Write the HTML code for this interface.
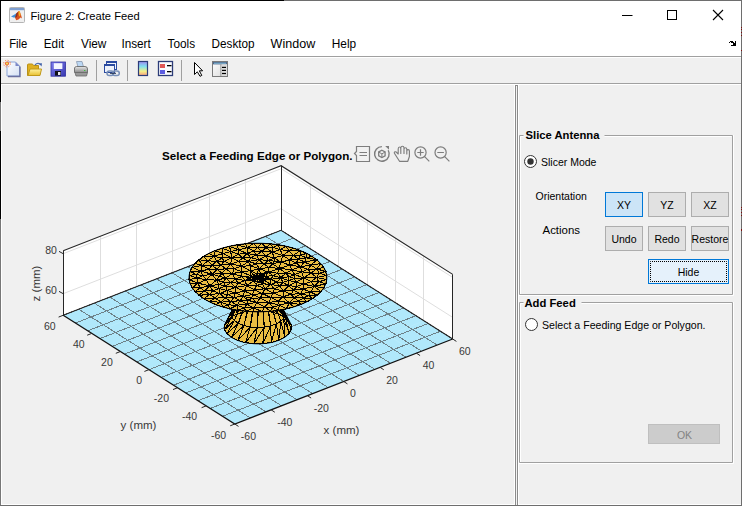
<!DOCTYPE html>
<html><head><meta charset="utf-8">
<style>
html,body{margin:0;padding:0;width:742px;height:506px;overflow:hidden;background:#fff}
svg{position:absolute;left:0;top:0}
</style></head><body>
<svg width="742" height="506" viewBox="0 0 742 506">
<!-- window chrome -->
<rect x="0" y="0" width="742" height="506" fill="#fff"/>
<rect x="0" y="85" width="742" height="421" fill="#f0f0f0"/>
<rect x="1" y="57" width="740" height="26" fill="#f0f0f0"/>
<rect x="1" y="56" width="740" height="1" fill="#a0a0a0"/>
<rect x="1" y="57" width="740" height="1" fill="#fff"/>
<rect x="1" y="83" width="740" height="1" fill="#a0a0a0"/>
<rect x="1" y="84" width="740" height="1" fill="#fff"/>
<rect x="0" y="0" width="284" height="1" fill="#000"/>
<rect x="284" y="0" width="458" height="1" fill="#6e6e6e"/>
<rect x="0" y="0" width="1" height="102" fill="#000"/>
<rect x="0" y="102" width="1" height="29" fill="#7a7a7a"/>
<rect x="0" y="131" width="1" height="88" fill="#000"/>
<rect x="0" y="219" width="1" height="287" fill="#777"/>
<rect x="1" y="85" width="1" height="420" fill="#fff"/>
<rect x="1" y="504" width="740" height="1" fill="#fff"/>
<rect x="741" y="0" width="1" height="506" fill="#6e6e6e"/>
<rect x="0" y="505" width="742" height="1" fill="#6e6e6e"/>
<!-- title icon -->
<g transform="translate(9,7)">
<rect x="0.5" y="0.5" width="15" height="15" rx="1" fill="#efefef" stroke="#b4b4b4"/>
<rect x="1" y="1" width="14" height="2.2" fill="#7f9fd0"/>
<path d="M2,9.6 L6,7.2 L8,5.8 L8.8,8 L7,10.5 L4.5,10.6 Z" fill="#3f8fd8"/>
<path d="M7.5,6.2 L9.6,3.9 L10.8,4.6 L12.2,8.5 L13,11.5 L11.6,10.4 L9.5,12.5 L7.2,13.2 L6.2,11 Z" fill="#d9501e"/>
<path d="M9.6,3.9 L10.8,4.6 L11.6,8 L10.2,9.5 L9.6,6.5 Z" fill="#f2b51c"/>
<path d="M7.5,6.2 L9.2,5 L8.3,9 L6.6,11.2 L6.4,9.5 Z" fill="#8c2f1a"/>
</g>
<text x="30.4" y="19.5" font-family="Liberation Sans" font-size="11.8" fill="#000" textLength="109.2" lengthAdjust="spacingAndGlyphs">Figure 2: Create Feed</text>
<!-- caption buttons -->
<path d="M622,15.5H632.5" stroke="#000" stroke-width="1"/>
<rect x="667.5" y="10.5" width="9" height="9" fill="none" stroke="#000" stroke-width="1"/>
<path d="M713,10L723,20M723,10L713,20" stroke="#000" stroke-width="1.1"/>
<g fill="#000" shape-rendering="crispEdges">
<rect x="729" y="42" width="1" height="1"/><rect x="730" y="41" width="3" height="1"/><rect x="731" y="42" width="3" height="1"/>
<rect x="733" y="43" width="3" height="2"/><rect x="735" y="41" width="1" height="5"/><rect x="731" y="45" width="5" height="1"/><rect x="734" y="42" width="1" height="1" fill="#fff"/>
</g>
<g fill="#7a0a0a" shape-rendering="crispEdges">
<rect x="741" y="27" width="1" height="1"/><rect x="741" y="29" width="1" height="1"/><rect x="741" y="32" width="1" height="1"/><rect x="741" y="35" width="1" height="1"/><rect x="741" y="50" width="1" height="1"/>
<rect x="741" y="207" width="1" height="1"/><rect x="741" y="209" width="1" height="1"/><rect x="741" y="212" width="1" height="1"/><rect x="741" y="215" width="1" height="1"/><rect x="741" y="229" width="1" height="2"/>
</g>
<!-- menu -->
<g font-family="Liberation Sans" font-size="12" fill="#000" lengthAdjust="spacingAndGlyphs">
<text x="9.2" y="48" textLength="18.2" lengthAdjust="spacingAndGlyphs">File</text>
<text x="43.8" y="48" textLength="20.2" lengthAdjust="spacingAndGlyphs">Edit</text>
<text x="81" y="48" textLength="25.4" lengthAdjust="spacingAndGlyphs">View</text>
<text x="121.4" y="48" textLength="29.4" lengthAdjust="spacingAndGlyphs">Insert</text>
<text x="167.5" y="48" textLength="27.6" lengthAdjust="spacingAndGlyphs">Tools</text>
<text x="211.6" y="48" textLength="43" lengthAdjust="spacingAndGlyphs">Desktop</text>
<text x="270.6" y="48" textLength="44.6" lengthAdjust="spacingAndGlyphs">Window</text>
<text x="331.8" y="48" textLength="24.4" lengthAdjust="spacingAndGlyphs">Help</text>
</g>
<!-- toolbar -->
<g id="tb">
<defs>
<linearGradient id="pap" x1="0" y1="0" x2="1" y2="1"><stop offset="0" stop-color="#ffffff"/><stop offset="1" stop-color="#d4e0f4"/></linearGradient>
<linearGradient id="fold" x1="0" y1="0" x2="0" y2="1"><stop offset="0" stop-color="#fff2a0"/><stop offset="1" stop-color="#e8c030"/></linearGradient>
<linearGradient id="flop" x1="0" y1="0" x2="1" y2="1"><stop offset="0" stop-color="#8080f0"/><stop offset="1" stop-color="#3838b0"/></linearGradient>
<linearGradient id="prn" x1="0" y1="0" x2="0" y2="1"><stop offset="0" stop-color="#e8e8e8"/><stop offset="1" stop-color="#8a8a8a"/></linearGradient>
<linearGradient id="cb" x1="0" y1="0" x2="0" y2="1">
<stop offset="0" stop-color="#a08cf0"/><stop offset="0.35" stop-color="#80e0f0"/><stop offset="0.7" stop-color="#f4f088"/><stop offset="1" stop-color="#f8a080"/></linearGradient>
<linearGradient id="pe" x1="0" y1="0" x2="1" y2="1"><stop offset="0" stop-color="#ffffff"/><stop offset="1" stop-color="#d8d8d8"/></linearGradient>
</defs>
<!-- new -->
<path d="M7,62 H15.5 L19.5,66 V76 H7 Z" fill="url(#pap)" stroke="#8aa4d8" stroke-width="1"/>
<path d="M8,76.5 H20 V66.5" fill="none" stroke="#6a70a0" stroke-width="1.4"/>
<path d="M15.5,62 V66 H19.5 Z" fill="#7c88c8"/>
<circle cx="7" cy="63.6" r="3.4" fill="none" stroke="#f08050" stroke-width="1" stroke-dasharray="1.2,1.5"/>
<circle cx="7" cy="63.6" r="2.1" fill="#f06a30"/>
<circle cx="7" cy="63.6" r="1" fill="#e8f060"/>
<!-- open -->
<path d="M27.5,75.5 V65 Q27.5,64 28.5,64 H32.5 L33.5,65.5 H38.5 V75.5 Z" fill="#e0b020" stroke="#b89018" stroke-width="1"/>
<path d="M28,75.5 L30,69 H41.5 L40,75.5 Z" fill="url(#fold)" stroke="#c09818" stroke-width="1"/>
<path d="M35,65 Q37.5,62.2 40.5,64.5" fill="none" stroke="#5070b0" stroke-width="1.2"/>
<path d="M39,63.5 L42,63.3 L41.5,66.5 Z" fill="#4060a8"/>
<!-- save -->
<rect x="51" y="62" width="14.5" height="14.2" fill="url(#flop)" stroke="#3030a0" stroke-width="0.8"/>
<rect x="53.8" y="63.2" width="8.6" height="5.8" fill="#f4f6ff"/>
<rect x="55" y="71" width="6" height="4.6" fill="#101018"/>
<rect x="58" y="72" width="2.4" height="3" fill="#e8e8f0"/>
<!-- print -->
<path d="M76.5,61.5 H82 L83.5,67 H78 Z" fill="#bcd8f4" stroke="#8898b0" stroke-width="0.8"/>
<path d="M74.5,68 Q75,66.5 76.5,66.5 H85 Q87.5,66.5 87.5,69 V72.5 H74.5 Z" fill="url(#prn)" stroke="#6a6a6a" stroke-width="0.9"/>
<path d="M75,72.5 H87.5 L86.5,76 H76 Z" fill="#9a9a9a" stroke="#6a6a6a" stroke-width="0.8"/>
<rect x="84" y="70" width="1.4" height="1" fill="#40c040"/>
<rect x="96" y="60" width="1" height="21" fill="#a0a0a0"/>
<!-- link -->
<rect x="106.5" y="61.5" width="10" height="8" fill="#f0f4fc" stroke="#2a4aa0" stroke-width="1"/>
<rect x="106" y="61" width="11" height="2" fill="#2a4aa0"/>
<rect x="104.5" y="64.5" width="10" height="8" fill="#eef2fa" stroke="#2a4aa0" stroke-width="1"/>
<rect x="104" y="64" width="11" height="2" fill="#2a4aa0"/>
<rect x="107" y="71" width="6.5" height="4.6" rx="2.3" fill="none" stroke="#7890b8" stroke-width="1.5"/>
<rect x="112.5" y="71" width="6.8" height="4.6" rx="2.3" fill="none" stroke="#7890b8" stroke-width="1.5"/>
<path d="M110,73.3 H116" stroke="#203050" stroke-width="1"/>
<rect x="127" y="60" width="1" height="21" fill="#a0a0a0"/>
<!-- colorbar -->
<rect x="138.5" y="61.5" width="9" height="14" fill="url(#cb)" stroke="#2c3c78" stroke-width="1.2"/>
<!-- legend -->
<rect x="158.5" y="61.5" width="14" height="14" fill="#fafbff" stroke="#2c3c78" stroke-width="1.3"/>
<rect x="160" y="64" width="5" height="4" fill="#e05858"/>
<rect x="160" y="70" width="5" height="4" fill="#5c5ce0"/>
<rect x="167" y="65" width="4.5" height="1.3" fill="#000"/>
<rect x="167" y="71" width="4.5" height="1.3" fill="#000"/>
<rect x="181" y="60" width="1" height="21" fill="#a0a0a0"/>
<!-- cursor -->
<path d="M194.5,62.5 V74.5 L197.3,71.8 L200,76.3 L201.8,75.4 L199.3,70.8 H202.6 Z" fill="#fff" stroke="#000" stroke-width="1"/>
<!-- property editor -->
<rect x="212.5" y="61.5" width="15" height="15" fill="url(#pe)" stroke="#7a7a7a" stroke-width="1"/>
<rect x="213" y="62" width="14" height="2.4" fill="#50688c"/>
<rect x="214" y="62.8" width="12" height="0.8" fill="#90d0e8"/>
<rect x="220.5" y="64.4" width="1" height="11.6" fill="#7a7a7a"/>
<rect x="221.5" y="64.4" width="5.5" height="11.6" fill="#dcdcdc"/>
<rect x="222" y="66.8" width="4" height="1.2" fill="#000"/>
<rect x="222" y="69.8" width="4" height="1.2" fill="#000"/>
<rect x="222" y="72.9" width="4" height="1.2" fill="#000"/>
</g>
<!-- divider -->
<rect x="514" y="85" width="5" height="420" fill="#fff"/>
<rect x="515" y="85" width="3" height="420" fill="#8c8c8c"/>
<rect x="516" y="86" width="1" height="419" fill="#f4f4f4"/>
<!-- plot -->
<polygon points="63.2,315.28 281.1,230.28 281.1,165.68 63.2,250.68" fill="#fff"/>
<polygon points="281.1,230.28 452.7,339 452.7,274.4 281.1,165.68" fill="#fff"/>
<path d="M100.5,301.11V236.51M423.5,320.88V256.28M136.5,286.95V222.35M395.5,302.76V238.16M172.5,272.78V208.18M367.5,284.64V220.04M209.5,258.62V194.02M338.5,266.52V201.92M245.5,244.45V179.85M310.5,248.4V183.8M63.2,293.68L281.1,208.68L452.7,317.4M63.2,253.68L281.1,168.68L452.7,277.4" stroke="#dedede" stroke-width="1" fill="none"/>
<polygon points="63.2,315.28 281.1,230.28 452.7,339 234.8,424" fill="#b0e8fb"/>
<path d="M271.12,409.83L99.52,301.11M206.2,405.88L424.1,320.88M307.43,395.67L135.83,286.95M177.6,387.76L395.5,302.76M343.75,381.5L172.15,272.78M149,369.64L366.9,284.64M380.06,367.34L208.46,258.62M120.4,351.52L338.3,266.52M416.38,353.17L244.78,244.45M91.8,333.4L309.7,248.4" stroke="#b8ebfb" stroke-width="1" fill="none"/>
<path d="M63.2,315.28L281.1,230.28L452.7,339M250.36,417.93L78.76,309.21M222.54,416.23L440.44,331.24M265.93,411.86L94.33,303.14M210.29,408.47L428.18,323.47M281.49,405.79L109.89,297.07M198.03,400.7L415.92,315.71M297.06,399.72L125.46,291M185.77,392.94L403.67,307.94M312.62,393.64L141.02,284.92M173.51,385.17L391.41,300.18M328.18,387.57L156.58,278.85M161.26,377.41L379.15,292.41M343.75,381.5L172.15,272.78M149,369.64L366.9,284.64M359.31,375.43L187.71,266.71M136.74,361.87L354.64,276.88M374.88,369.36L203.28,260.64M124.49,354.11L342.38,269.11M390.44,363.29L218.84,254.57M112.23,346.34L330.12,261.35M406,357.22L234.4,248.5M99.97,338.58L317.87,253.58M421.57,351.15L249.97,242.43M87.71,330.81L305.61,245.82M437.13,345.08L265.53,236.36M75.46,323.05L293.35,238.05" stroke="#3c3634" stroke-opacity="0.58" stroke-width="1" fill="none" shape-rendering="crispEdges"/>
<path d="M63.2,315.28L281.1,230.28L452.7,339" stroke="#262626" stroke-width="1.1" fill="none"/>
<path d="M224.46,327.73L224.46,326.42L224.67,325.11L225.08,323.82L225.7,322.55L250.39,275.47L250.58,275.17L250.81,274.89L251.09,274.62L251.42,274.36L251.78,274.11L252.18,273.88L252.62,273.66L253.09,273.46L253.59,273.28L254.11,273.12L254.66,272.98L255.23,272.87L255.82,272.77L256.42,272.7L257.03,272.66L257.64,272.63L258.26,272.64L258.88,272.66L259.48,272.71L260.08,272.78L260.67,272.88L261.24,273L261.79,273.14L262.32,273.3L262.82,273.48L263.29,273.68L263.72,273.9L264.12,274.13L264.48,274.38L264.81,274.65L265.09,274.92L265.32,275.2L265.51,275.5L283.86,310.56L290.21,322.68L290.82,323.96L291.23,325.25L291.44,326.55L291.44,327.86L291.23,329.17L290.81,330.46L290.2,331.73L289.38,332.98L288.38,334.18L287.18,335.35L285.8,336.46L284.26,337.52L282.55,338.51L280.68,339.43L278.68,340.28L276.55,341.04L274.31,341.72L271.96,342.31L269.53,342.81L267.03,343.21L264.47,343.51L261.87,343.71L259.25,343.81L256.62,343.8L253.99,343.69L251.39,343.48L248.84,343.17L246.33,342.76L243.9,342.26L241.56,341.66L239.32,340.97L237.19,340.2L235.19,339.34L233.33,338.41L231.62,337.41L230.07,336.35L228.7,335.23L227.51,334.06L226.5,332.85L225.69,331.6L225.08,330.33L224.66,329.03L224.46,327.73Z" fill="#eabd42" stroke="#000" stroke-width="1"/>
<path d="M284.28,316.87L278.01,313.82L272.03,302.75ZM284.28,316.87L272.03,302.75L277.49,304.96ZM278.01,313.82L270.38,311.68L265.61,301.31ZM278.01,313.82L265.61,301.31L272.03,302.75ZM270.38,311.68L261.9,310.59L258.67,300.75ZM270.38,311.68L258.67,300.75L265.61,301.31ZM261.9,310.59L253.16,310.63L251.68,301.1ZM261.9,310.59L251.68,301.1L258.67,300.75ZM253.16,310.63L244.73,311.79L245.11,302.34ZM253.16,310.63L245.11,302.34L251.68,301.1ZM244.73,311.79L237.21,314L239.43,304.39ZM244.73,311.79L239.43,304.39L245.11,302.34ZM237.21,314L231.11,317.11L235,307.1ZM237.21,314L235,307.1L239.43,304.39ZM231.11,317.11L226.83,320.9L232.14,310.29ZM231.11,317.11L232.14,310.29L235,307.1ZM226.83,320.9L224.67,325.11L231.04,313.74ZM226.83,320.9L231.04,313.74L232.14,310.29ZM224.67,325.11L224.78,329.47L231.77,317.22ZM224.67,325.11L231.77,317.22L231.04,313.74ZM224.78,329.47L227.15,333.66L234.28,320.49ZM224.78,329.47L234.28,320.49L231.77,317.22ZM227.15,333.66L231.62,337.41L238.41,323.32ZM227.15,333.66L238.41,323.32L234.28,320.49ZM231.62,337.41L237.88,340.46L243.87,325.54ZM231.62,337.41L243.87,325.54L238.41,323.32ZM237.88,340.46L245.51,342.6L250.29,326.97ZM237.88,340.46L250.29,326.97L243.87,325.54ZM245.51,342.6L253.99,343.69L257.23,327.53ZM245.51,342.6L257.23,327.53L250.29,326.97ZM253.99,343.69L262.74,343.65L264.22,327.18ZM253.99,343.69L264.22,327.18L257.23,327.53ZM262.74,343.65L271.16,342.49L270.78,325.94ZM262.74,343.65L270.78,325.94L264.22,327.18ZM271.16,342.49L278.68,340.28L276.47,323.9ZM271.16,342.49L276.47,323.9L270.78,325.94ZM278.68,340.28L284.79,337.17L280.9,321.19ZM278.68,340.28L280.9,321.19L276.47,323.9ZM284.79,337.17L289.07,333.38L283.76,318ZM284.79,337.17L283.76,318L280.9,321.19ZM289.07,333.38L291.23,329.17L284.86,314.55ZM289.07,333.38L284.86,314.55L283.76,318ZM291.23,329.17L291.12,324.82L284.13,311.07ZM291.23,329.17L284.13,311.07L284.86,314.55ZM291.12,324.82L288.75,320.62L281.61,307.8ZM291.12,324.82L281.61,307.8L284.13,311.07ZM288.75,320.62L284.28,316.87L277.49,304.96ZM288.75,320.62L277.49,304.96L281.61,307.8ZM277.49,304.96L272.03,302.75L261.43,273.04ZM277.49,304.96L261.43,273.04L263.13,273.61ZM272.03,302.75L265.61,301.31L259.48,272.71ZM272.03,302.75L259.48,272.71L261.43,273.04ZM265.61,301.31L258.67,300.75L257.44,272.64ZM265.61,301.31L257.44,272.64L259.48,272.71ZM258.67,300.75L251.68,301.1L255.43,272.83ZM258.67,300.75L255.43,272.83L257.44,272.64ZM251.68,301.1L245.11,302.34L253.59,273.28ZM251.68,301.1L253.59,273.28L255.43,272.83ZM245.11,302.34L239.43,304.39L252.04,273.95ZM245.11,302.34L252.04,273.95L253.59,273.28ZM239.43,304.39L235,307.1L250.9,274.8ZM239.43,304.39L250.9,274.8L252.04,273.95ZM235,307.1L232.14,310.29L250.24,275.76ZM235,307.1L250.24,275.76L250.9,274.8ZM232.14,310.29L231.04,313.74L250.11,276.78ZM232.14,310.29L250.11,276.78L250.24,275.76ZM231.04,313.74L231.77,317.22L250.51,277.78ZM231.04,313.74L250.51,277.78L250.11,276.78ZM231.77,317.22L234.28,320.49L251.41,278.7ZM231.77,317.22L251.41,278.7L250.51,277.78ZM234.28,320.49L238.41,323.32L252.76,279.47ZM234.28,320.49L252.76,279.47L251.41,278.7ZM238.41,323.32L243.87,325.54L254.47,280.04ZM238.41,323.32L254.47,280.04L252.76,279.47ZM243.87,325.54L250.29,326.97L256.41,280.37ZM243.87,325.54L256.41,280.37L254.47,280.04ZM250.29,326.97L257.23,327.53L258.46,280.44ZM250.29,326.97L258.46,280.44L256.41,280.37ZM257.23,327.53L264.22,327.18L260.47,280.25ZM257.23,327.53L260.47,280.25L258.46,280.44ZM264.22,327.18L270.78,325.94L262.31,279.8ZM264.22,327.18L262.31,279.8L260.47,280.25ZM270.78,325.94L276.47,323.9L263.85,279.13ZM270.78,325.94L263.85,279.13L262.31,279.8ZM276.47,323.9L280.9,321.19L264.99,278.29ZM276.47,323.9L264.99,278.29L263.85,279.13ZM280.9,321.19L283.76,318L265.65,277.32ZM280.9,321.19L265.65,277.32L264.99,278.29ZM283.76,318L284.86,314.55L265.79,276.3ZM283.76,318L265.79,276.3L265.65,277.32ZM284.86,314.55L284.13,311.07L265.39,275.3ZM284.86,314.55L265.39,275.3L265.79,276.3ZM284.13,311.07L281.61,307.8L264.48,274.38ZM284.13,311.07L264.48,274.38L265.39,275.3ZM281.61,307.8L277.49,304.96L263.13,273.61ZM281.61,307.8L263.13,273.61L264.48,274.38Z" fill="#eabd42" stroke="#000" stroke-width="1" shape-rendering="crispEdges"/>
<path d="M312.06,256.43L309.75,255.05L307.31,253.73L304.73,252.47L302.02,251.28L299.19,250.17L296.24,249.12L293.19,248.16L290.05,247.28L286.81,246.48L283.5,245.76L280.12,245.14L276.68,244.6L273.18,244.15L269.65,243.79L266.08,243.53L262.49,243.35L258.88,243.28L255.28,243.29L251.68,243.4L248.1,243.61L244.54,243.9L241.03,244.29L237.56,244.77L234.14,245.34L230.79,246L227.52,246.74L224.32,247.57L221.22,248.48L218.22,249.48L215.33,250.54L212.56,251.68L209.91,252.9L207.39,254.18L205.01,255.52L202.78,256.93L200.7,258.39L198.77,259.9L197.01,261.46L195.41,263.07L193.99,264.71L192.74,266.39L191.67,268.11L190.78,269.84L190.07,271.6L189.55,273.38L189.22,275.16L189.08,276.95L189.12,278.75L189.36,280.54L189.78,282.32L190.39,284.09L191.18,285.84L192.16,287.57L193.32,289.27L194.65,290.94L196.16,292.57L197.84,294.17L199.68,295.71L201.68,297.21L203.84,298.65L206.14,300.03L208.59,301.36L211.17,302.61L213.88,303.8L216.71,304.92L219.65,305.96L222.7,306.92L225.85,307.81L229.08,308.61L232.39,309.32L235.78,309.95L239.22,310.49L242.71,310.94L246.25,311.29L249.82,311.56L253.41,311.73L257.01,311.81L260.62,311.79L264.22,311.68L267.8,311.48L271.35,311.18L274.87,310.79L278.34,310.31L281.76,309.74L285.11,309.08L288.38,308.34L291.57,307.51L294.67,306.6L297.67,305.61L300.56,304.54L303.34,303.4L305.98,302.19L308.5,300.91L310.88,299.56L313.11,298.16L315.2,296.7L317.12,295.18L318.89,293.62L320.48,292.02L321.91,290.37L323.16,288.69L324.23,286.98L325.12,285.24L325.82,283.48L326.34,281.71L326.67,279.92L326.82,278.13L326.77,276.34L326.54,274.54L326.12,272.76L325.51,270.99L324.71,269.24L323.74,267.51L322.58,265.81L321.24,264.14L319.74,262.51L318.06,260.92L316.22,259.37L314.21,257.88L312.06,256.43Z" fill="#eabd42" stroke="#000" stroke-width="1"/>
<path d="M246.96,253.47L238.4,249.77L238.37,254.12ZM238.4,249.77L246.96,253.47L247.35,247.75ZM269.1,302.42L260.26,297.94L256.62,302.46ZM260.26,297.94L269.1,302.42L270.84,297.47ZM200.91,271.16L202.88,275.66L212.1,274.31ZM225.72,278.08L235.35,279.15L232.21,273.67ZM209.53,294.53L219.64,293.55L212.69,290.7ZM192.24,287.7L200.06,287.81L197.93,283.25ZM314.27,286.49L318.66,281.74L310.98,281.58ZM318.66,281.74L314.27,286.49L325.73,283.75ZM318.66,281.74L316.6,277.44L310.98,281.58ZM222.99,253.62L222.17,248.2L215.33,250.54ZM214.05,256.3L222.99,253.62L215.33,250.54ZM222.19,273.25L225.72,278.08L232.21,273.67ZM222.19,273.25L217.01,269.32L212.1,274.31ZM209.02,269.14L200.91,271.16L212.1,274.31ZM217.01,269.32L209.02,269.14L212.1,274.31ZM222.11,258.04L214.05,256.3L216.62,261.28ZM214.05,256.3L222.11,258.04L222.99,253.62ZM257.26,247.41L265.96,247.57L261.93,243.34ZM265.96,247.57L257.26,247.41L261.97,251.53ZM253.92,251.12L257.26,247.41L247.35,247.75ZM246.96,253.47L253.92,251.12L247.35,247.75ZM257.26,247.41L253.92,251.12L261.97,251.53ZM257.26,247.41L253.62,243.33L247.35,247.75ZM253.62,243.33L245.36,243.83L247.35,247.75ZM253.62,243.33L257.26,247.41L261.93,243.34ZM230.73,251.55L238.4,249.77L229.52,246.28ZM222.17,248.2L230.73,251.55L229.52,246.28ZM230.73,251.55L222.17,248.2L222.99,253.62ZM238.4,249.77L230.73,251.55L238.37,254.12ZM245.36,243.83L237.29,244.81L247.35,247.75ZM237.29,244.81L238.4,249.77L247.35,247.75ZM238.4,249.77L237.29,244.81L229.52,246.28ZM272.11,252.17L265.96,247.57L261.97,251.53ZM265.96,247.57L272.11,252.17L273.19,247.56ZM272.11,252.17L280.17,249.57L273.19,247.56ZM278.27,244.83L280.17,249.57L286.06,246.31ZM280.17,249.57L278.27,244.83L273.19,247.56ZM262.39,293.63L264.96,288.74L254.35,289.92ZM262.39,293.63L260.26,297.94L270.84,297.47ZM262.28,311.75L253.89,307.97L253.96,311.75ZM314.27,286.49L323.76,287.77L325.73,283.75ZM192.14,267.31L190.17,271.33L200.91,271.16ZM196.24,274.45L202.88,275.66L200.91,271.16ZM196.24,274.45L190.17,271.33L189.19,275.44ZM190.17,271.33L196.24,274.45L200.91,271.16ZM216.61,280.1L223.52,282.24L225.72,278.08ZM235.35,279.15L242.11,276.48L232.21,273.67ZM242.11,276.48L235.35,279.15L244.94,280.41ZM235.42,287.44L230.65,282.69L225.76,286ZM230.65,282.69L223.52,282.24L225.76,286ZM230.65,282.69L235.35,279.15L225.72,278.08ZM223.52,282.24L230.65,282.69L225.72,278.08ZM219.64,293.55L215.06,298.08L224.94,297.85ZM215.06,298.08L219.64,293.55L209.53,294.53ZM215.06,298.08L209.53,294.53L203.84,298.65ZM219.64,293.55L218.95,288.55L212.69,290.7ZM227.14,290.5L235.42,287.44L225.76,286ZM218.95,288.55L227.14,290.5L225.76,286ZM227.14,290.5L218.95,288.55L219.64,293.55ZM215.06,298.08L221.06,302.16L224.94,297.85ZM237.62,310.25L244.38,307.72L236.95,305.31ZM190.23,283.68L192.24,287.7L197.93,283.25ZM189.21,279.58L190.23,283.68L197.93,283.25ZM197.15,278.12L189.21,279.58L197.93,283.25ZM196.24,274.45L197.15,278.12L202.88,275.66ZM189.21,279.58L197.15,278.12L189.19,275.44ZM197.15,278.12L196.24,274.45L189.19,275.44ZM204.62,290.92L209.53,294.53L212.69,290.7ZM278.27,244.83L270.19,243.84L273.19,247.56ZM265.96,247.57L270.19,243.84L261.93,243.34ZM270.19,243.84L265.96,247.57L273.19,247.56ZM306.53,253.33L306.24,257.75L312.06,256.43ZM326.71,279.65L318.66,281.74L325.73,283.75ZM316.6,277.44L326.71,279.65L326.69,275.51ZM326.71,279.65L316.6,277.44L318.66,281.74ZM291.95,269.91L289.65,265.14L279.41,268.35ZM310.93,265.11L300.3,266.69L307.94,269.18ZM289.65,265.14L300.3,266.69L296.33,262.82ZM300.3,266.69L289.65,265.14L291.95,269.91ZM301.68,271.87L291.95,269.91L294.65,274.54ZM301.68,271.87L310.9,273.06L307.94,269.18ZM300.3,266.69L301.68,271.87L307.94,269.18ZM301.68,271.87L300.3,266.69L291.95,269.91ZM271.06,279.28L280.77,277.76L272.96,275.58ZM291.95,269.91L285.74,273.19L294.65,274.54ZM285.74,273.19L291.95,269.91L279.41,268.35ZM285.74,273.19L289.03,276.72L294.65,274.54ZM289.03,276.72L285.74,273.19L280.77,277.76ZM314.27,286.49L302.86,289.02L310.55,291.93ZM209.12,253.28L214.05,256.3L215.33,250.54ZM214.05,256.3L209.12,253.28L203.62,256.38ZM219.38,276.28L216.61,280.1L225.72,278.08ZM222.19,273.25L219.38,276.28L225.72,278.08ZM216.61,280.1L219.38,276.28L212.1,274.31ZM219.38,276.28L222.19,273.25L212.1,274.31ZM209.02,269.14L202.29,265.36L200.91,271.16ZM192.14,267.31L202.29,265.36L195.07,263.44ZM202.29,265.36L192.14,267.31L200.91,271.16ZM202.29,265.36L198.92,259.78L195.07,263.44ZM242.68,257.68L246.96,253.47L238.37,254.12ZM241.74,266.09L238.94,261.31L230.81,264.07ZM224.22,261.31L220.75,265.1L230.81,264.07ZM224.22,261.31L222.11,258.04L216.62,261.28ZM220.75,265.1L224.22,261.31L216.62,261.28ZM231.6,257.66L242.68,257.68L238.37,254.12ZM242.68,257.68L231.6,257.66L238.94,261.31ZM222.11,258.04L231.6,257.66L222.99,253.62ZM224.22,261.31L231.6,257.66L222.11,258.04ZM230.73,251.55L231.6,257.66L238.37,254.12ZM231.6,257.66L230.73,251.55L222.99,253.62ZM238.94,261.31L231.6,257.66L230.81,264.07ZM231.6,257.66L224.22,261.31L230.81,264.07ZM220.75,265.1L225.98,268.89L230.81,264.07ZM225.98,268.89L222.19,273.25L232.21,273.67ZM222.19,273.25L225.98,268.89L217.01,269.32ZM225.98,268.89L220.75,265.1L217.01,269.32ZM265.69,256.04L272.11,252.17L261.97,251.53ZM272.11,252.17L265.69,256.04L274.32,257.85ZM256.53,254.97L253.92,251.12L246.96,253.47ZM265.69,256.04L256.53,254.97L258.65,259.66ZM253.92,251.12L256.53,254.97L261.97,251.53ZM256.53,254.97L265.69,256.04L261.97,251.53ZM259.41,268.8L264.04,263.93L256.13,263.75ZM264.04,263.93L258.65,259.66L256.13,263.75ZM280.17,249.57L289.18,250.92L286.06,246.31ZM289.18,250.92L293.27,255.3L300.29,250.59ZM252.27,294.46L262.39,293.63L254.35,289.92ZM262.39,293.63L252.27,294.46L260.26,297.94ZM246.69,285.51L244.31,291.11L254.35,289.92ZM244.31,291.11L246.69,285.51L235.42,287.44ZM244.31,291.11L252.27,294.46L254.35,289.92ZM252.27,294.46L244.31,291.11L243.43,296.42ZM230.93,301.35L228.29,304.85L236.95,305.31ZM221.06,302.16L230.93,301.35L224.94,297.85ZM230.93,301.35L221.06,302.16L228.29,304.85ZM244.38,307.72L246.94,304.08L236.95,305.31ZM246.94,304.08L253.89,307.97L256.62,302.46ZM253.89,307.97L246.94,304.08L244.38,307.72ZM254.9,276.49L253.22,274.41L250.84,275.86ZM254.26,277.39L254.9,276.49L250.84,275.86ZM254.9,276.49L254.26,277.39L257.95,277.54ZM255.85,279.05L257.65,279.38L257.95,277.54ZM253.76,280.84L257.65,279.38L255.85,279.05ZM246.69,285.51L253.76,280.84L244.94,280.41ZM264.96,288.74L256.64,285.27L254.35,289.92ZM262.51,283.76L256.64,285.27L264.96,288.74ZM256.64,285.27L246.69,285.51L254.35,289.92ZM256.64,285.27L253.76,280.84L246.69,285.51ZM264.58,307.03L253.89,307.97L262.28,311.75ZM270.53,311.26L264.58,307.03L262.28,311.75ZM264.58,307.03L269.1,302.42L256.62,302.46ZM253.89,307.97L264.58,307.03L256.62,302.46ZM269.1,302.42L278.28,300.96L270.84,297.47ZM279.21,305.31L278.28,300.96L269.1,302.42ZM320.83,291.64L314.27,286.49L310.55,291.93ZM320.83,291.64L323.76,287.77L314.27,286.49ZM316.98,295.3L320.83,291.64L310.55,291.93ZM250.1,277.69L242.11,276.48L244.94,280.41ZM242.11,276.48L250.1,277.69L250.84,275.86ZM250.1,277.69L254.26,277.39L250.84,275.86ZM246.69,285.51L238.37,283.14L235.42,287.44ZM238.37,283.14L230.65,282.69L235.42,287.44ZM238.37,283.14L246.69,285.51L244.94,280.41ZM235.35,279.15L238.37,283.14L244.94,280.41ZM230.65,282.69L238.37,283.14L235.35,279.15ZM209.37,301.75L215.06,298.08L203.84,298.65ZM221.06,302.16L209.37,301.75L215.61,304.5ZM209.37,301.75L221.06,302.16L215.06,298.08ZM218.88,284.56L223.52,282.24L216.61,280.1ZM223.52,282.24L218.88,284.56L225.76,286ZM218.88,284.56L218.95,288.55L225.76,286ZM228.29,304.85L229.84,308.78L236.95,305.31ZM229.84,308.78L237.62,310.25L236.95,305.31ZM237.62,310.25L245.7,311.24L244.38,307.72ZM253.89,307.97L245.7,311.24L253.96,311.75ZM245.7,311.24L253.89,307.97L244.38,307.72ZM209.53,294.53L199.1,295.24L203.84,298.65ZM204.62,290.92L199.1,295.24L209.53,294.53ZM316.8,259.84L310.93,265.11L320.68,263.51ZM306.24,257.75L316.8,259.84L312.06,256.43ZM316.6,277.44L303.59,277.92L310.98,281.58ZM310.9,273.06L303.59,277.92L316.6,277.44ZM303.59,277.92L301.68,271.87L294.65,274.54ZM301.68,271.87L303.59,277.92L310.9,273.06ZM319.21,273.21L316.6,277.44L326.69,275.51ZM319.21,273.21L310.9,273.06L316.6,277.44ZM268.52,272.19L265.49,276.46L272.96,275.58ZM265.49,276.46L271.06,279.28L272.96,275.58ZM260.42,273.84L268.52,272.19L259.41,268.8ZM300.3,266.69L304.55,262.01L296.33,262.82ZM304.55,262.01L300.3,266.69L310.93,265.11ZM304.55,262.01L298.19,259.03L296.33,262.82ZM298.19,259.03L304.55,262.01L306.24,257.75ZM304.55,262.01L316.8,259.84L306.24,257.75ZM316.8,259.84L304.55,262.01L310.93,265.11ZM262.51,283.76L264.04,280.02L261.04,281.14ZM280.77,277.76L276.86,282.17L282.84,282.5ZM271.06,279.28L276.86,282.17L280.77,277.76ZM280.77,277.76L277.67,273.15L272.96,275.58ZM285.74,273.19L277.67,273.15L280.77,277.76ZM277.67,273.15L285.74,273.19L279.41,268.35ZM268.52,272.19L277.67,273.15L279.41,268.35ZM277.67,273.15L268.52,272.19L272.96,275.58ZM288.67,285.68L288.68,280.5L282.84,282.5ZM288.68,280.5L288.67,285.68L295.85,282.27ZM288.68,280.5L280.77,277.76L282.84,282.5ZM288.68,280.5L289.03,276.72L280.77,277.76ZM303.57,284.14L314.27,286.49L310.98,281.58ZM303.57,284.14L302.86,289.02L314.27,286.49ZM303.59,277.92L303.57,284.14L310.98,281.58ZM303.57,284.14L303.59,277.92L295.85,282.27ZM202.29,265.36L207.82,260.84L198.92,259.78ZM198.92,259.78L207.82,260.84L203.62,256.38ZM214.05,256.3L207.82,260.84L216.62,261.28ZM207.82,260.84L214.05,256.3L203.62,256.38ZM241.74,266.09L248.37,261.56L238.94,261.31ZM248.37,261.56L242.68,257.68L238.94,261.31ZM258.65,259.66L248.37,261.56L256.13,263.75ZM253.22,274.41L250.31,270.76L250.84,275.86ZM264.04,263.93L268.8,267.46L272.62,263.98ZM272.62,263.98L268.8,267.46L279.41,268.35ZM268.8,267.46L268.52,272.19L279.41,268.35ZM268.52,272.19L268.8,267.46L259.41,268.8ZM268.8,267.46L264.04,263.93L259.41,268.8ZM300.64,255.27L298.19,259.03L306.24,257.75ZM298.19,259.03L300.64,255.27L293.27,255.3ZM306.53,253.33L300.64,255.27L306.24,257.75ZM293.27,255.3L300.64,255.27L300.29,250.59ZM300.64,255.27L306.53,253.33L300.29,250.59ZM289.18,250.92L293.43,248.23L286.06,246.31ZM293.43,248.23L289.18,250.92L300.29,250.59ZM251.86,298.22L252.27,294.46L243.43,296.42ZM260.26,297.94L251.86,298.22L256.62,302.46ZM252.27,294.46L251.86,298.22L260.26,297.94ZM244.31,291.11L235.29,292.92L243.43,296.42ZM227.14,290.5L235.29,292.92L235.42,287.44ZM235.29,292.92L244.31,291.11L235.42,287.44ZM240.1,300.78L230.93,301.35L236.95,305.31ZM246.94,304.08L240.1,300.78L236.95,305.31ZM259.53,279.21L257.65,279.38L261.04,281.14ZM264.04,280.02L259.53,279.21L261.04,281.14ZM259.53,279.21L264.04,280.02L260.99,278.59ZM259.53,279.21L260.99,278.59L257.95,277.54ZM257.65,279.38L259.53,279.21L257.95,277.54ZM256.64,285.27L257.33,281.44L253.76,280.84ZM257.65,279.38L257.33,281.44L261.04,281.14ZM253.76,280.84L257.33,281.44L257.65,279.38ZM257.33,281.44L262.51,283.76L261.04,281.14ZM257.33,281.44L256.64,285.27L262.51,283.76ZM272.67,307.13L264.58,307.03L270.53,311.26ZM272.67,307.13L270.53,311.26L278.6,310.27ZM279.21,305.31L272.67,307.13L278.6,310.27ZM272.67,307.13L279.21,305.31L269.1,302.42ZM264.58,307.03L272.67,307.13L269.1,302.42ZM286.37,308.81L279.21,305.31L278.6,310.27ZM283.47,290.97L282.88,296.92L290.98,294.14ZM278.28,300.96L282.88,296.92L270.84,297.47ZM312.27,298.7L303.39,298.04L306.77,301.8ZM279.36,286.05L274.38,289.01L283.47,290.97ZM288.67,285.68L279.36,286.05L283.47,290.97ZM279.36,286.05L288.67,285.68L282.84,282.5ZM276.86,282.17L279.36,286.05L282.84,282.5ZM293.81,290.22L283.47,290.97L290.98,294.14ZM293.81,290.22L288.67,285.68L283.47,290.97ZM250.1,277.69L254.61,278.33L254.26,277.39ZM254.61,278.33L255.85,279.05L257.95,277.54ZM254.26,277.39L254.61,278.33L257.95,277.54ZM209.62,285.75L218.88,284.56L216.61,280.1ZM200.06,287.81L209.62,285.75L197.93,283.25ZM209.62,285.75L204.62,290.92L212.69,290.7ZM204.62,290.92L209.62,285.75L200.06,287.81ZM218.95,288.55L209.62,285.75L212.69,290.7ZM218.88,284.56L209.62,285.75L218.95,288.55ZM222.46,306.85L229.84,308.78L228.29,304.85ZM222.46,306.85L221.06,302.16L215.61,304.5ZM221.06,302.16L222.46,306.85L228.29,304.85ZM195.21,291.57L204.62,290.92L200.06,287.81ZM195.21,291.57L199.1,295.24L204.62,290.92ZM195.21,291.57L200.06,287.81L192.24,287.7ZM303.59,277.92L294.51,278.35L295.85,282.27ZM294.51,278.35L288.68,280.5L295.85,282.27ZM288.68,280.5L294.51,278.35L289.03,276.72ZM289.03,276.72L294.51,278.35L294.65,274.54ZM294.51,278.35L303.59,277.92L294.65,274.54ZM325.66,271.4L319.21,273.21L326.69,275.51ZM316.76,268.98L310.93,265.11L307.94,269.18ZM310.9,273.06L316.76,268.98L307.94,269.18ZM319.21,273.21L316.76,268.98L310.9,273.06ZM316.76,268.98L325.66,271.4L323.65,267.38ZM325.66,271.4L316.76,268.98L319.21,273.21ZM316.76,268.98L323.65,267.38L320.68,263.51ZM310.93,265.11L316.76,268.98L320.68,263.51ZM260.99,278.59L261.63,277.7L257.95,277.54ZM263.61,274.84L265.49,276.46L268.52,272.19ZM260.42,273.84L263.61,274.84L268.52,272.19ZM268.42,260.4L264.04,263.93L272.62,263.98ZM274.2,261.13L268.42,260.4L272.62,263.98ZM264.04,263.93L268.42,260.4L258.65,259.66ZM268.42,260.4L265.69,256.04L258.65,259.66ZM265.69,256.04L268.42,260.4L274.32,257.85ZM268.42,260.4L274.2,261.13L274.32,257.85ZM290.01,260.15L289.65,265.14L296.33,262.82ZM298.19,259.03L290.01,260.15L296.33,262.82ZM290.01,260.15L298.19,259.03L293.27,255.3ZM265.49,276.46L265.65,278.33L271.06,279.28ZM265.65,278.33L264.04,280.02L271.06,279.28ZM261.63,277.7L265.65,278.33L265.49,276.46ZM264.04,280.02L265.65,278.33L260.99,278.59ZM265.65,278.33L261.63,277.7L260.99,278.59ZM270.48,284.43L262.51,283.76L264.96,288.74ZM274.38,289.01L270.48,284.43L264.96,288.74ZM270.48,284.43L276.86,282.17L271.06,279.28ZM279.36,286.05L270.48,284.43L274.38,289.01ZM270.48,284.43L279.36,286.05L276.86,282.17ZM270.48,284.43L264.04,280.02L262.51,283.76ZM264.04,280.02L270.48,284.43L271.06,279.28ZM303.57,284.14L296.66,286.49L302.86,289.02ZM296.66,286.49L293.81,290.22L302.86,289.02ZM293.81,290.22L296.66,286.49L288.67,285.68ZM288.67,285.68L296.66,286.49L295.85,282.27ZM296.66,286.49L303.57,284.14L295.85,282.27ZM212.06,265.29L202.29,265.36L209.02,269.14ZM212.06,265.29L207.82,260.84L202.29,265.36ZM207.82,260.84L212.06,265.29L216.62,261.28ZM212.06,265.29L220.75,265.1L216.62,261.28ZM212.06,265.29L209.02,269.14L217.01,269.32ZM220.75,265.1L212.06,265.29L217.01,269.32ZM248.37,261.56L250.81,265.92L256.13,263.75ZM250.81,265.92L248.37,261.56L241.74,266.09ZM250.31,270.76L250.81,265.92L241.74,266.09ZM250.81,265.92L259.41,268.8L256.13,263.75ZM250.81,265.92L250.31,270.76L259.41,268.8ZM248.37,261.56L250.75,257.54L242.68,257.68ZM242.68,257.68L250.75,257.54L246.96,253.47ZM250.75,257.54L256.53,254.97L246.96,253.47ZM256.53,254.97L250.75,257.54L258.65,259.66ZM250.75,257.54L248.37,261.56L258.65,259.66ZM256.67,273.68L260.42,273.84L259.41,268.8ZM250.31,270.76L256.67,273.68L259.41,268.8ZM256.67,273.68L250.31,270.76L253.22,274.41ZM256.67,273.68L258.24,275.71L260.42,273.84ZM241.54,271.81L250.31,270.76L241.74,266.09ZM242.11,276.48L241.54,271.81L232.21,273.67ZM241.54,271.81L242.11,276.48L250.84,275.86ZM250.31,270.76L241.54,271.81L250.84,275.86ZM240.1,300.78L233.84,297.32L230.93,301.35ZM230.93,301.35L233.84,297.32L224.94,297.85ZM235.29,292.92L233.84,297.32L243.43,296.42ZM233.84,297.32L240.1,300.78L243.43,296.42ZM247.88,300.38L240.1,300.78L246.94,304.08ZM247.88,300.38L246.94,304.08L256.62,302.46ZM251.86,298.22L247.88,300.38L256.62,302.46ZM247.88,300.38L251.86,298.22L243.43,296.42ZM240.1,300.78L247.88,300.38L243.43,296.42ZM282.88,296.92L273.22,293.03L270.84,297.47ZM273.22,293.03L282.88,296.92L283.47,290.97ZM274.38,289.01L273.22,293.03L283.47,290.97ZM273.22,293.03L262.39,293.63L270.84,297.47ZM262.39,293.63L273.22,293.03L264.96,288.74ZM273.22,293.03L274.38,289.01L264.96,288.74ZM306.77,301.8L298.72,300.98L300.56,304.54ZM303.39,298.04L298.72,300.98L306.77,301.8ZM308.73,295.48L303.39,298.04L312.27,298.7ZM308.73,295.48L316.98,295.3L310.55,291.93ZM308.73,295.48L312.27,298.7L316.98,295.3ZM251.15,279.49L254.61,278.33L250.1,277.69ZM253.76,280.84L251.15,279.49L244.94,280.41ZM251.15,279.49L250.1,277.69L244.94,280.41ZM251.15,279.49L253.76,280.84L255.85,279.05ZM254.61,278.33L251.15,279.49L255.85,279.05ZM209.62,285.75L206.31,279.65L197.93,283.25ZM206.31,279.65L209.62,285.75L216.61,280.1ZM206.31,279.65L197.15,278.12L197.93,283.25ZM197.15,278.12L206.31,279.65L202.88,275.66ZM202.88,275.66L206.31,279.65L212.1,274.31ZM206.31,279.65L216.61,280.1L212.1,274.31ZM254.9,276.49L256.36,275.88L253.22,274.41ZM256.36,275.88L256.67,273.68L253.22,274.41ZM256.67,273.68L256.36,275.88L258.24,275.71ZM256.36,275.88L254.9,276.49L257.95,277.54ZM258.24,275.71L256.36,275.88L257.95,277.54ZM260.05,276.03L258.24,275.71L257.95,277.54ZM260.05,276.03L263.61,274.84L260.42,273.84ZM258.24,275.71L260.05,276.03L260.42,273.84ZM290.01,260.15L280.57,261.92L289.65,265.14ZM280.57,261.92L274.2,261.13L272.62,263.98ZM274.2,261.13L280.57,261.92L274.32,257.85ZM280.57,261.92L272.62,263.98L279.41,268.35ZM289.65,265.14L280.57,261.92L279.41,268.35ZM282.83,255.49L290.01,260.15L293.27,255.3ZM289.18,250.92L282.83,255.49L293.27,255.3ZM280.57,261.92L282.83,255.49L274.32,257.85ZM282.83,255.49L280.57,261.92L290.01,260.15ZM282.83,255.49L289.18,250.92L280.17,249.57ZM282.83,255.49L272.11,252.17L274.32,257.85ZM282.83,255.49L280.17,249.57L272.11,252.17ZM234.18,268.72L241.54,271.81L241.74,266.09ZM234.18,268.72L241.74,266.09L230.81,264.07ZM225.98,268.89L234.18,268.72L230.81,264.07ZM234.18,268.72L225.98,268.89L232.21,273.67ZM241.54,271.81L234.18,268.72L232.21,273.67ZM233.84,297.32L228.16,294.47L224.94,297.85ZM228.16,294.47L233.84,297.32L235.29,292.92ZM228.16,294.47L235.29,292.92L227.14,290.5ZM228.16,294.47L219.64,293.55L224.94,297.85ZM228.16,294.47L227.14,290.5L219.64,293.55ZM289.27,302.81L282.88,296.92L278.28,300.96ZM289.27,302.81L278.28,300.96L279.21,305.31ZM289.27,302.81L293.73,306.89L300.56,304.54ZM298.72,300.98L289.27,302.81L300.56,304.54ZM286.37,308.81L289.27,302.81L279.21,305.31ZM289.27,302.81L286.37,308.81L293.73,306.89ZM294.17,297.84L298.72,300.98L303.39,298.04ZM294.17,297.84L289.27,302.81L298.72,300.98ZM282.88,296.92L294.17,297.84L290.98,294.14ZM289.27,302.81L294.17,297.84L282.88,296.92ZM302.86,289.02L300.55,293.84L310.55,291.93ZM300.55,293.84L308.73,295.48L310.55,291.93ZM293.81,290.22L300.55,293.84L302.86,289.02ZM300.55,293.84L293.81,290.22L290.98,294.14ZM308.73,295.48L300.55,293.84L303.39,298.04ZM294.17,297.84L300.55,293.84L290.98,294.14ZM300.55,293.84L294.17,297.84L303.39,298.04ZM261.29,276.76L261.63,277.7L265.49,276.46ZM263.61,274.84L261.29,276.76L265.49,276.46ZM260.05,276.03L261.29,276.76L263.61,274.84ZM261.63,277.7L261.29,276.76L257.95,277.54ZM261.29,276.76L260.05,276.03L257.95,277.54Z" fill="none" stroke="#000" stroke-width="1" shape-rendering="crispEdges"/>
<path d="M63.2,250.68L281.1,165.68L452.7,274.4" stroke="#262626" stroke-width="1.1" fill="none"/>
<path d="M63.5,315.28V250.68M281.5,230.28V165.68M452.5,339V274.4" stroke="#262626" stroke-width="1" fill="none"/>
<path d="M63.2,315.28L234.8,424L452.7,339" stroke="#111" stroke-width="1.3" fill="none"/>
<path d="M234.8,424l-4.6,1.8M234.8,424l3.7,2.4M206.2,405.88l-4.6,1.8M271.12,409.83l3.7,2.4M177.6,387.76l-4.6,1.8M307.43,395.67l3.7,2.4M149,369.64l-4.6,1.8M343.75,381.5l3.7,2.4M120.4,351.52l-4.6,1.8M380.06,367.34l3.7,2.4M91.8,333.4l-4.6,1.8M416.38,353.17l3.7,2.4M63.2,315.28l-4.6,1.8M452.7,339l3.7,2.4M63.2,293.68l-4.2,-2.3M63.2,253.68l-4.2,-2.3" stroke="#262626" stroke-width="1" fill="none"/>
<text x="49.75" y="329.8" text-anchor="middle" font-family="Liberation Sans" font-size="10.5" fill="#383838">60</text>
<text x="78.8" y="348.05" text-anchor="middle" font-family="Liberation Sans" font-size="10.5" fill="#383838">40</text>
<text x="106.9" y="366.2" text-anchor="middle" font-family="Liberation Sans" font-size="10.5" fill="#383838">20</text>
<text x="139.2" y="383.8" text-anchor="middle" font-family="Liberation Sans" font-size="10.5" fill="#383838">0</text>
<text x="161.4" y="401.8" text-anchor="middle" font-family="Liberation Sans" font-size="10.5" fill="#383838">-20</text>
<text x="189.5" y="420.1" text-anchor="middle" font-family="Liberation Sans" font-size="10.5" fill="#383838">-40</text>
<text x="218.6" y="438.8" text-anchor="middle" font-family="Liberation Sans" font-size="10.5" fill="#383838">-60</text>
<text x="240.8" y="439.8" font-family="Liberation Sans" font-size="10.5" fill="#383838">-60</text>
<text x="277.2" y="425.8" font-family="Liberation Sans" font-size="10.5" fill="#383838">-40</text>
<text x="313.7" y="412.3" font-family="Liberation Sans" font-size="10.5" fill="#383838">-20</text>
<text x="350" y="397.3" font-family="Liberation Sans" font-size="10.5" fill="#383838">0</text>
<text x="386.2" y="383.6" font-family="Liberation Sans" font-size="10.5" fill="#383838">20</text>
<text x="422.7" y="369.1" font-family="Liberation Sans" font-size="10.5" fill="#383838">40</text>
<text x="459" y="355.1" font-family="Liberation Sans" font-size="10.5" fill="#383838">60</text>
<text x="51" y="254.10000000000002" text-anchor="middle" font-family="Liberation Sans" font-size="10.5" fill="#383838">80</text>
<text x="51" y="293.8" text-anchor="middle" font-family="Liberation Sans" font-size="10.5" fill="#383838">60</text>
<text x="138.5" y="429" text-anchor="middle" font-family="Liberation Sans" font-size="11.5" fill="#383838">y (mm)</text>
<text x="341.5" y="434" text-anchor="middle" font-family="Liberation Sans" font-size="11.5" fill="#383838">x (mm)</text>
<text transform="translate(39.8,283.5) rotate(-90)" text-anchor="middle" font-family="Liberation Sans" font-size="11.5" fill="#383838">z (mm)</text>
<text x="162" y="159.7" font-family="Liberation Sans" font-size="11.5" font-weight="bold" fill="#000" textLength="190.5" lengthAdjust="spacingAndGlyphs">Select a Feeding Edge or Polygon.</text>
<!-- axes toolbar -->
<g stroke="#7d7d7d" fill="none" stroke-width="1.2">
<path d="M356.5,146.5H369.5V161.5H356.5V155.5L354.5,153.5L356.5,151.5Z"/>
<path d="M359.5,152.5H367M359.5,155.5H367"/>
<path d="M381.9,146.6A7.3,7.3 0 1 0 388.2,150.25" stroke-width="1.4"/>
<path d="M385.2,146H389V149.8Z" fill="#7d7d7d" stroke="none"/>
<path d="M381.9,150.2L385.1,152V155.8L381.9,157.6L378.7,155.8V152Z" stroke-width="1.3"/>
<path d="M378.7,152L381.9,153.9L385.1,152M381.9,153.9V157.6" stroke-width="1"/>
<path d="M399.5,161.3L394.4,153.3Q393.9,151.5 396,151.8L398.2,154V149Q398.2,147 399.5,147Q400.8,147 400.8,149V153.5V148Q400.8,146.2 402.4,146.2Q404,146.2 404,148V153.5V149.3Q404,147.7 405.4,147.7Q406.8,147.7 406.8,149.3V154V151Q406.8,149.6 408.1,149.6Q409.4,149.6 409.4,151V156.5L407.8,161.3Z" stroke-width="1.15" stroke-linejoin="round"/>
<circle cx="420.5" cy="152.5" r="5.6"/>
<path d="M417.3,152.5H423.7M420.5,149.3V155.7M424.6,156.6L429.3,161.3"/>
<circle cx="440.6" cy="152.5" r="5.6"/>
<path d="M437.3,152.5H443.9M444.7,156.6L449.4,161.3"/>
</g>
<!-- right panel -->
<g fill="none">
<path d="M519.5,294.5V135.5H523.5M604.5,135.5H732.5V294.5H519.5" stroke="#a0a0a0"/>
<path d="M520.5,294V136.5H523.5M604.5,136.5H731.5M733.5,135V295.5H519" stroke="#fff"/>
<path d="M519.5,462.5V302.5H523.5M581.5,302.5H732.5V462.5H519.5" stroke="#a0a0a0"/>
<path d="M520.5,462V303.5H523.5M581.5,303.5H731.5M733.5,302V463.5H519" stroke="#fff"/>
</g>
<g font-family="Liberation Sans" fill="#000">
<text x="525.5" y="139" font-size="11.25" font-weight="bold">Slice Antenna</text>
<text x="524.5" y="306.8" font-size="11.25" font-weight="bold">Add Feed</text>
<text x="541" y="165.8" font-size="10.5">Slicer Mode</text>
<text x="535.5" y="200.2" font-size="10.5">Orientation</text>
<text x="542.5" y="234.2" font-size="10.5" textLength="37.5" lengthAdjust="spacingAndGlyphs">Actions</text>
<text x="542" y="328.7" font-size="10.5" textLength="163.5" lengthAdjust="spacingAndGlyphs">Select a Feeding Edge or Polygon.</text>
</g>
<circle cx="530.5" cy="161.5" r="6" fill="#fff" stroke="#333" stroke-width="1"/>
<circle cx="530.5" cy="161.5" r="3.2" fill="#333"/>
<circle cx="531.5" cy="324.5" r="6" fill="#fff" stroke="#333" stroke-width="1"/>
<!-- buttons -->
<rect x="605.5" y="192.5" width="37" height="24" fill="#cce4f7" stroke="#0078d7"/>
<rect x="648.5" y="192.5" width="37" height="24" fill="#e1e1e1" stroke="#adadad"/>
<rect x="691.5" y="192.5" width="37" height="24" fill="#e1e1e1" stroke="#adadad"/>
<rect x="605.5" y="226.5" width="37" height="24" fill="#e1e1e1" stroke="#adadad"/>
<rect x="648.5" y="226.5" width="37" height="24" fill="#e1e1e1" stroke="#adadad"/>
<rect x="691.5" y="226.5" width="37" height="24" fill="#e1e1e1" stroke="#adadad"/>
<rect x="648.5" y="259.5" width="80" height="24" fill="#e5f1fb" stroke="#0078d7"/>
<rect x="650.5" y="261.5" width="76" height="20" fill="none" stroke="#000" stroke-dasharray="1,1" stroke-dashoffset="0.5"/>
<rect x="648.5" y="424.5" width="71" height="19" fill="#cccccc" stroke="#bfbfbf"/>
<g font-family="Liberation Sans" font-size="10.5" fill="#000" text-anchor="middle">
<text x="624" y="208.8">XY</text>
<text x="667" y="208.8">YZ</text>
<text x="710" y="208.8">XZ</text>
<text x="624" y="242.7">Undo</text>
<text x="667" y="242.7">Redo</text>
<text x="710" y="242.7">Restore</text>
<text x="688.5" y="276">Hide</text>
<text x="684.5" y="439" fill="#838383">OK</text>
</g>
</svg>
</body></html>
